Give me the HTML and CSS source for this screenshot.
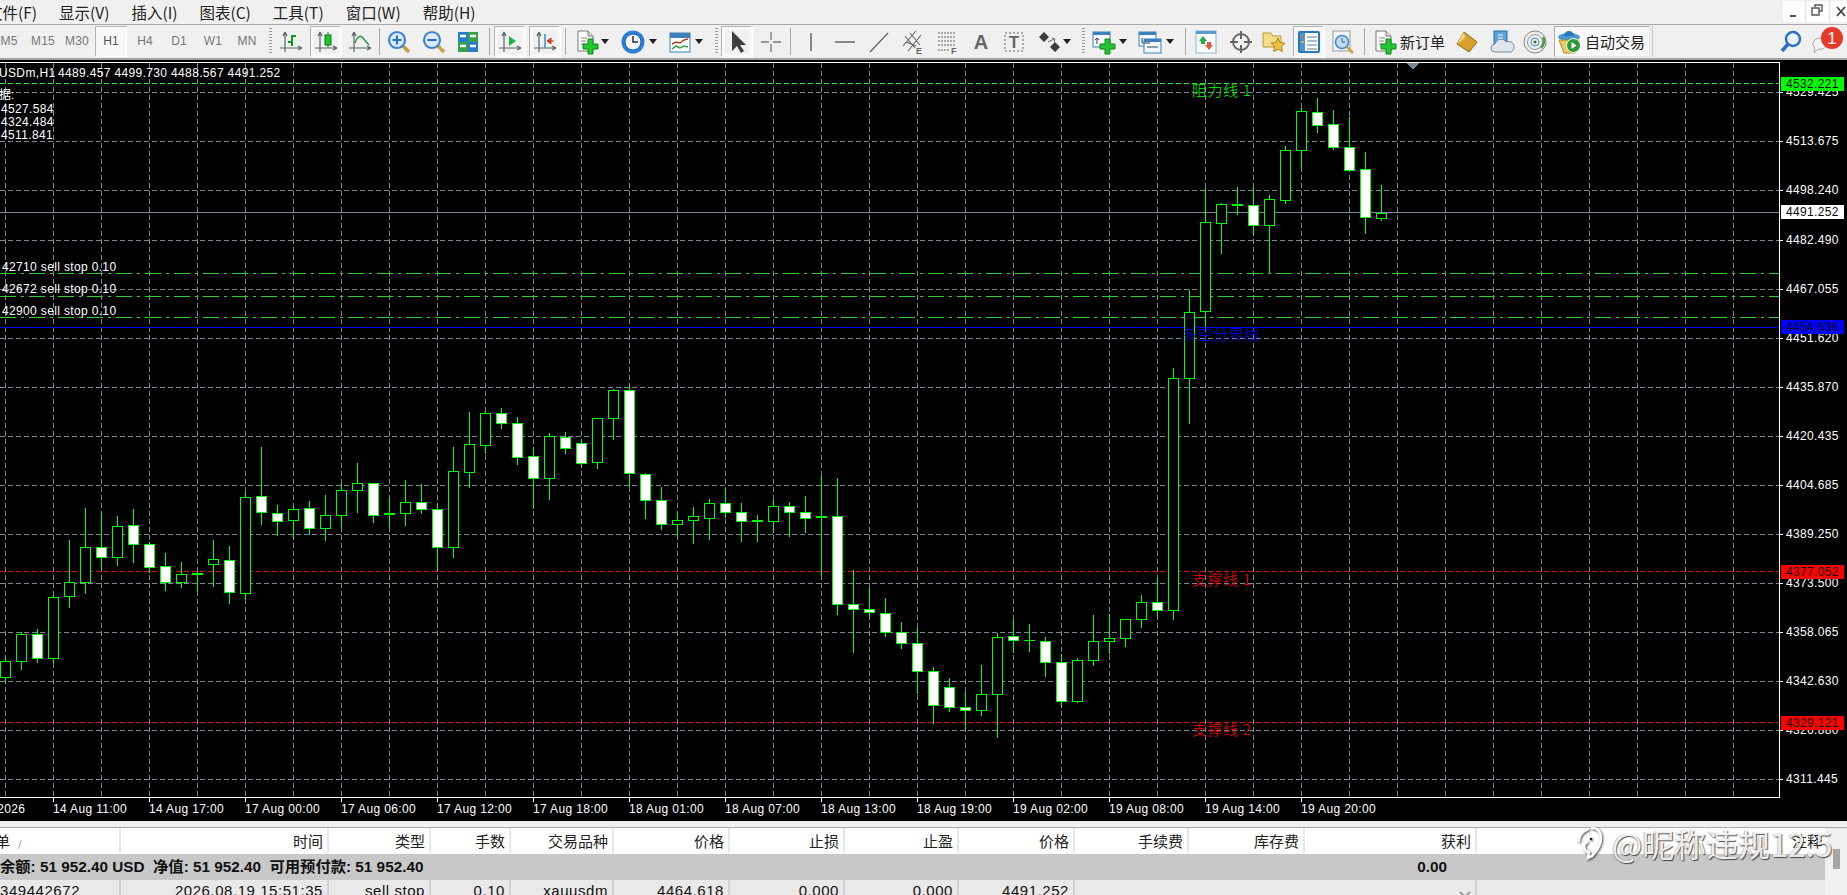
FILE: index.html
```html
<!DOCTYPE html>
<html lang="zh">
<head>
<meta charset="utf-8">
<title>MetaTrader</title>
<link rel="stylesheet" href="styles.css">
</head>
<body>
<div class="app">
  <header class="menu">
    <nav class="menu-items">
      <span class="mi first">文件(F)</span><span class="mi">显示(V)</span><span class="mi">插入(I)</span><span class="mi">图表(C)</span><span class="mi">工具(T)</span><span class="mi">窗口(W)</span><span class="mi">帮助(H)</span>
    </nav>
    <div class="winbtns">
      <span class="wb"><svg viewBox="0 0 21 21" width="21" height="21"><path d="M7 15h6" stroke="#555" stroke-width="2"/></svg></span>
      <span class="wb"><svg viewBox="0 0 21 21" width="21" height="21"><path d="M8 6V4h7v6h-3M5 7h7v7H5z" fill="none" stroke="#555" stroke-width="1.4"/></svg></span>
      <span class="wb"><svg viewBox="0 0 21 21" width="21" height="21"><path d="M6 6l8 9M14 6l-8 9" stroke="#444" stroke-width="1.8"/></svg></span>
    </div>
  </header>

  <div class="toolbar">
    <span class="tf">M5</span><span class="tf">M15</span><span class="tf">M30</span><span class="tf tf-on">H1</span><span class="tf">H4</span><span class="tf">D1</span><span class="tf">W1</span><span class="tf">MN</span>
    <i class="grip g5"></i>
    <span class="ic g7"><svg viewBox="0 0 24 24"><use href="#axes"/><path d="M13 5v11M13 6h4M9 12h4" stroke="#0a9a1e" stroke-width="2" fill="none"/></svg></span>
    <span class="ic g11 on"><svg viewBox="0 0 24 24"><use href="#axes"/><path d="M14 2v16" stroke="#1a7a1a"/><rect x="11" y="5" width="6" height="10" fill="#22c22a" stroke="#0a7a1a"/></svg></span>
    <span class="ic g10"><svg viewBox="0 0 24 24"><use href="#axes"/><path d="M7 13c2-6 5-8 7-6l7 8" stroke="#2a9a3a" stroke-width="1.5" fill="none"/></svg></span>
    <i class="sep g7"></i>
    <span class="ic g7"><svg viewBox="0 0 24 24"><use href="#hand"/><circle cx="10" cy="10" r="8" fill="#dcecfb" stroke="#3f84d2" stroke-width="2.2"/><path d="M10 5.500v9M5.500 10h9" stroke="#2a70c8" stroke-width="2.2"/></svg></span>
    <span class="ic g11"><svg viewBox="0 0 24 24"><use href="#hand"/><circle cx="10" cy="10" r="8" fill="#dcecfb" stroke="#3f84d2" stroke-width="2.2"/><path d="M5.500 10h9" stroke="#2a70c8" stroke-width="2.2"/></svg></span>
    <span class="ic g10"><svg viewBox="0 0 24 24"><rect x="2" y="2" width="10" height="10" fill="#2a7cc8"/><rect x="12" y="2" width="10" height="10" fill="#36a04a"/><rect x="2" y="12" width="10" height="10" fill="#36a04a"/><rect x="12" y="12" width="10" height="10" fill="#2a7cc8"/><path d="M4 6h6M14 6h6M4 16h6M14 16h6" stroke="#fff" stroke-width="2.500"/></svg></span>
    <i class="sep g9"></i>
    <span class="ic g8 on"><svg viewBox="0 0 24 24"><use href="#axes"/><path d="M11 6l7 5-7 5z" fill="#1fb34a"/></svg></span>
    <span class="ic g11 on"><svg viewBox="0 0 24 24"><use href="#axes"/><path d="M12 4v14" stroke="#3a86c8" stroke-width="1.500"/><path d="M21 11h-4M14 11l4-3v6z" fill="#c83a1a" stroke="#c83a1a"/></svg></span>
    <i class="sep g8"></i>
    <span class="ic g9"><svg viewBox="0 0 24 24"><use href="#doc"/><use href="#plus"/></svg></span><i class="caret g2"></i>
    <span class="ic g12"><svg viewBox="0 0 24 24"><circle cx="12" cy="12" r="11.500" fill="#2b7fd6"/><circle cx="12" cy="12" r="8" fill="#f4f8fc" stroke="#0f5fb0"/><path d="M12 6v6h5" stroke="#234" stroke-width="1.500" fill="none"/></svg></span><i class="caret g4"></i>
    <span class="ic g11"><svg viewBox="0 0 24 24"><rect x="2" y="3" width="20" height="19" fill="#fff" stroke="#3c80bc"/><rect x="2" y="3" width="20" height="5" fill="#3c80bc"/><path d="M4 14l4-2 4 1 4-3 4-1" stroke="#b8401a" stroke-width="1.500" fill="none"/><path d="M4 19l4-3 4 2 4-2 4 1" stroke="#3aa04a" stroke-width="1.500" fill="none"/></svg></span><i class="caret g3"></i>
    <i class="grip g12"></i>
    <span class="ic g7 on"><svg viewBox="0 0 24 24"><path d="M7 1v20l5-5 4 7 3-2-4-6h6z" fill="#3d3d3d"/></svg></span>
    <span class="ic g10"><svg viewBox="0 0 24 24"><path d="M12 2v8M12 14v8M2 12h8M14 12h8" stroke="#777" stroke-width="1.300"/></svg></span>
    <i class="sep g7"></i>
    <span class="ic g8"><svg viewBox="0 0 24 24"><path d="M12 3v18" stroke="#666" stroke-width="1.500"/></svg></span>
    <span class="ic g10"><svg viewBox="0 0 24 24"><path d="M2 12h20" stroke="#666" stroke-width="1.500"/></svg></span>
    <span class="ic g10"><svg viewBox="0 0 24 24"><path d="M3 22L21 3" stroke="#666" stroke-width="1.300"/></svg></span>
    <span class="ic g10"><svg viewBox="0 0 24 24"><path d="M2 16L15 1M7 21L20 5M4 6l10 12M9 3l10 12M5 12l10 4" stroke="#666" stroke-width="1.100" fill="none"/><text x="15" y="24" class="ic-t">E</text></svg></span>
    <span class="ic g10"><svg viewBox="0 0 24 24"><path d="M3 3h18M3 7h18M3 11h18M3 15h18M3 20h12" stroke="#666" stroke-dasharray="2 1" fill="none"/><text x="16" y="24" class="ic-t">F</text></svg></span>
    <span class="ic g10"><svg viewBox="0 0 24 24"><text x="12" y="19" class="ic-a">A</text></svg></span>
    <span class="ic g9"><svg viewBox="0 0 24 24"><rect x="3" y="3" width="18" height="18" fill="none" stroke="#666" stroke-dasharray="2 2"/><text x="12" y="18" class="ic-a sm">T</text></svg></span>
    <span class="ic g12"><svg viewBox="0 0 24 24"><path d="M6 2l5 5-5 5-5-5zM17 12l5 5-5 5-5-5z" fill="#3c3c3c"/><path d="M10 12l6-3M14 8l3 1-1 3" stroke="#666" fill="none"/></svg></span><i class="caret g1"></i>
    <i class="grip g11"></i>
    <span class="ic g7"><svg viewBox="0 0 24 24"><rect x="1" y="2" width="17" height="15" fill="#f4f8fc" stroke="#3c80bc"/><rect x="1" y="2" width="17" height="3" fill="#3c80bc"/><path d="M5 8v6M3 10l2-2 2 2" stroke="#345" fill="none"/><use href="#plus"/></svg></span><i class="caret g3"></i>
    <span class="ic g11"><svg viewBox="0 0 24 24"><rect x="1" y="2" width="17" height="14" fill="#f4f8fc" stroke="#3c80bc"/><rect x="1" y="2" width="17" height="3" fill="#3c80bc"/><rect x="6" y="9" width="17" height="14" fill="#f4f8fc" stroke="#3c80bc"/><rect x="6" y="9" width="17" height="3" fill="#3c80bc"/><path d="M9 17h11" stroke="#345"/><path d="M4 8v5M4 13h8" stroke="#345"/></svg></span><i class="caret g4"></i>
    <i class="sep g11"></i>
    <span class="ic g8"><svg viewBox="0 0 24 24"><rect x="2" y="1" width="20" height="22" fill="#f8fbff" stroke="#8cb4d8"/><rect x="2" y="1" width="20" height="3" fill="#5b9bd0"/><path d="M9 6l4 5h-2v3H7v-3H5z" fill="#2aa84a"/><path d="M15 20l-4-5h2v-3h4v3h2z" fill="#e0603a"/></svg></span>
    <span class="ic g11"><svg viewBox="0 0 24 24"><circle cx="12" cy="12" r="8" fill="none" stroke="#666" stroke-width="2"/><path d="M12 1v8M12 15v8M1 12h8M15 12h8" stroke="#666" stroke-width="2"/></svg></span>
    <span class="ic g9"><svg viewBox="0 0 24 24"><path d="M1 3h8l2 3h8v11H1z" fill="#f4dc88" stroke="#b89a40"/><path d="M16 8l2.200 4.500 4.800.7-3.500 3.400.8 4.900-4.300-2.300-4.300 2.300.8-4.900L9 13.200l4.800-.7z" fill="#f0c040" stroke="#a88420"/></svg></span>
    <span class="ic g11 on"><svg viewBox="0 0 24 24"><rect x="2" y="2" width="20" height="20" rx="1" fill="#fff" stroke="#2a78bc" stroke-width="2"/><rect x="3" y="3" width="5" height="18" fill="#4a96d4"/><path d="M10 7h10M10 11h10M10 15h10M10 19h10" stroke="#5a7a94"/><path d="M4 7h3" stroke="#e0603a" stroke-width="2"/><path d="M4 12h3" stroke="#e0b03a" stroke-width="2"/></svg></span>
    <span class="ic g10"><svg viewBox="0 0 24 24"><rect x="2" y="1" width="17" height="20" fill="#f4f4f4" stroke="#999"/><circle cx="11" cy="12" r="6.500" fill="#bcdcf4" stroke="#4a88c4" stroke-width="1.500"/><path d="M11 8v4h3" stroke="#456" fill="none"/><path d="M16 17l6 6" stroke="#c8a040" stroke-width="2.500"/></svg></span>
    <i class="sep g9"></i>
    <span class="ic g8"><svg viewBox="0 0 24 24"><use href="#doc"/><use href="#plus"/></svg></span>
    <span class="tx g3">新订单</span>
    <span class="ic g10"><svg viewBox="0 0 24 24"><path d="M9 2l13 10-8 10L2 14z" fill="#d9a12e" stroke="#8c6414"/><path d="M9 2l-7 12 8-6z" fill="#f4d886"/></svg></span>
    <span class="ic g11"><svg viewBox="0 0 24 24"><rect x="4" y="1" width="13" height="14" fill="#5aa2dc" stroke="#2a6ca8"/><path d="M8 5h5M8 8h5" stroke="#fff"/><path d="M5 22a4 4 0 010-8 6 6 0 0111-2 5 5 0 015 10z" fill="#dfe6ee" stroke="#7c8ca0"/></svg></span>
    <span class="ic g9"><svg viewBox="0 0 24 24"><circle cx="12" cy="12" r="11" fill="#eee" stroke="#888"/><circle cx="12" cy="12" r="7.500" fill="none" stroke="#999"/><circle cx="12" cy="12" r="4" fill="none" stroke="#4a8ec4"/><circle cx="12" cy="12" r="1.500" fill="#2a7a2a"/><path d="M18 18c3-3 4-8 2-11" stroke="#4a9a4a" stroke-width="2.500" fill="none"/></svg></span>
    <div class="auto g7">
      <span class="ic"><svg viewBox="0 0 24 24"><ellipse cx="12" cy="7" rx="11" ry="4" fill="#4a96d4"/><path d="M7 6a5 5 0 0110 0z" fill="#2a78bc"/><path d="M2 10h20l-4 13H7z" fill="#e8cc62" stroke="#a88a2c"/><circle cx="16.500" cy="15.500" r="7" fill="#2a9a3a" stroke="#fff"/><path d="M14.500 12v7l5-3.500z" fill="#fff"/></svg></span>
      <span class="tx g4">自动交易</span>
    </div>
    <i class="sep end g2"></i>
    <div class="tool-right">
      <span class="ic"><svg viewBox="0 0 24 24"><circle cx="14" cy="9" r="7" fill="#eaf3fb" stroke="#3070c0" stroke-width="2.500"/><path d="M9 14l-6 7" stroke="#3070c0" stroke-width="3.500"/></svg></span>
      <span class="ic chat"><svg viewBox="0 0 24 24"><path d="M1 14a7 6 0 0114 0 7 6 0 01-9 5l-4 4 1-5a7 6 0 01-2-4z" fill="#f4f4f4" stroke="#aaa"/><circle cx="20" cy="8" r="11" fill="#e8382a"/><text x="20" y="14" class="ic-b">1</text></svg></span>
    </div>
  </div>

  <div class="chart-wrap">
    <svg class="chart" id="chart" viewBox="0 60 1847 761" width="1847" height="761" xmlns="http://www.w3.org/2000/svg">
      <g id="grid"></g>
      <path class="frame" d="M0 62.500H1779.500V797.500H0"/>
      <path class="hl hl-green" d="M0 83.500H1779"/>
      <path class="hl hl-bid" d="M0 212.500H1779"/>
      <path class="hl hl-order" d="M0 273.500H1779"/>
      <path class="hl hl-order" d="M0 296.500H1779"/>
      <path class="hl hl-order" d="M0 317.500H1779"/>
      <path class="hl hl-blue" d="M0 327.500H1779"/>
      <path class="hl hl-red" d="M0 571.500H1779"/>
      <path class="hl hl-red" d="M0 722.500H1779"/>
      <g id="candles"></g>
      <path class="marker" d="M1407 63h12l-6 7z"/>

      <text class="t" x="-1" y="77">USDm,H1</text>
      <text class="t" x="58" y="77">4489.457 4499.730 4488.567 4491.252</text>
      <text class="t cjk" x="-13" y="99">数据:</text>
      <text class="t" x="1" y="113">4527.584</text>
      <text class="t" x="1" y="126">4324.484</text>
      <text class="t" x="1" y="139">4511.841</text>
      <text class="t" x="2" y="271">42710 sell stop 0.10</text>
      <text class="t" x="2" y="293">42672 sell stop 0.10</text>
      <text class="t" x="2" y="315">42900 sell stop 0.10</text>

      <text class="lbl lbl-g" x="1192" y="96">阻力线 1</text>
      <text class="lbl lbl-b" x="1182" y="340">多空分界线</text>
      <text class="lbl lbl-r" x="1192" y="585">支撑线 1</text>
      <text class="lbl lbl-r" x="1192" y="735">支撑线 2</text>

      <g class="axis-y">
        <text class="t" x="1786" y="96">4529.425</text>
        <text class="t" x="1786" y="145">4513.675</text>
        <text class="t" x="1786" y="194">4498.240</text>
        <text class="t" x="1786" y="244">4482.490</text>
        <text class="t" x="1786" y="293">4467.055</text>
        <text class="t" x="1786" y="342">4451.620</text>
        <text class="t" x="1786" y="391">4435.870</text>
        <text class="t" x="1786" y="440">4420.435</text>
        <text class="t" x="1786" y="489">4404.685</text>
        <text class="t" x="1786" y="538">4389.250</text>
        <text class="t" x="1786" y="587">4373.500</text>
        <text class="t" x="1786" y="636">4358.065</text>
        <text class="t" x="1786" y="685">4342.630</text>
        <text class="t" x="1786" y="734">4326.880</text>
        <text class="t" x="1786" y="783">4311.445</text>
      </g>
      <rect class="pl pl-g" x="1781" y="77" width="63" height="14"/><text class="t dark" x="1786" y="88">4532.221</text>
      <rect class="pl pl-w" x="1781" y="205" width="63" height="14"/><text class="t dark" x="1786" y="216">4491.252</text>
      <rect class="pl pl-b" x="1781" y="320" width="63" height="14"/><text class="t dark" x="1786" y="331">4454.636</text>
      <rect class="pl pl-r" x="1781" y="565" width="63" height="14"/><text class="t dark" x="1786" y="576">4377.052</text>
      <rect class="pl pl-r" x="1781" y="716" width="63" height="14"/><text class="t dark" x="1786" y="727">4329.121</text>

      <g class="axis-x">
        <text class="t" x="-46" y="813">14 Aug 2026</text>
        <text class="t" x="53" y="813">14 Aug 11:00</text>
        <text class="t" x="149" y="813">14 Aug 17:00</text>
        <text class="t" x="245" y="813">17 Aug 00:00</text>
        <text class="t" x="341" y="813">17 Aug 06:00</text>
        <text class="t" x="437" y="813">17 Aug 12:00</text>
        <text class="t" x="533" y="813">17 Aug 18:00</text>
        <text class="t" x="629" y="813">18 Aug 01:00</text>
        <text class="t" x="725" y="813">18 Aug 07:00</text>
        <text class="t" x="821" y="813">18 Aug 13:00</text>
        <text class="t" x="917" y="813">18 Aug 19:00</text>
        <text class="t" x="1013" y="813">19 Aug 02:00</text>
        <text class="t" x="1109" y="813">19 Aug 08:00</text>
        <text class="t" x="1205" y="813">19 Aug 14:00</text>
        <text class="t" x="1301" y="813">19 Aug 20:00</text>
      </g>
    </svg>
  </div>

  <section class="terminal">
    <div class="tbl">
      <div class="row head">
        <div class="c c-first"><span class="clip">订单</span><span class="sort">/</span></div>
        <div class="c">时间</div><div class="c">类型</div><div class="c">手数</div><div class="c">交易品种</div><div class="c">价格</div><div class="c">止损</div><div class="c">止盈</div><div class="c">价格</div><div class="c">手续费</div><div class="c">库存费</div><div class="c">获利</div><div class="c c-note">注释</div>
      </div>
      <div class="row summary">
        <div class="sum-text">余额: 51 952.40 USD&nbsp; 净值: 51 952.40&nbsp; 可用预付款: 51 952.40</div>
        <div class="sum-profit">0.00</div>
      </div>
      <div class="row data">
        <div class="c c-first">349442672</div>
        <div class="c">2026.08.19 15:51:35</div><div class="c">sell stop</div><div class="c">0.10</div><div class="c">xauusdm</div><div class="c">4464.618</div><div class="c">0.000</div><div class="c">0.000</div><div class="c">4491.252</div><div class="c"></div><div class="c"></div>
        <div class="c c-x"><svg viewBox="0 0 12 12" width="12" height="12"><path d="M1 1l10 10M11 1L1 11" stroke="#9a9a9a" stroke-width="2"/></svg></div>
        <div class="c c-note"></div>
      </div>
    </div>
    <div class="scroll"><i class="thumb"></i></div>
  </section>

  <div class="watermark">
    <svg viewBox="0 0 26 34" width="26" height="34"><path d="M16 2c6 0 9 4 9 10 0 9-6 14-9 18l-4 2 1-6c-4 0-5-3-5-6 0-2 1-3 3-4M3 15c0-6 4-10 9-12" fill="none" stroke="#fff" stroke-width="2.600" stroke-linecap="round"/><circle cx="15" cy="13" r="1.300" fill="#222"/></svg>
    <span>@昵称违规12.5</span>
  </div>
</div>

<svg class="defs" width="0" height="0" xmlns="http://www.w3.org/2000/svg">
  <defs>
    <g id="axes"><path d="M6 2v20M1 18h22M6 2L4 6M6 2l2 4M23 18l-4-2M23 18l-4 2" fill="none" stroke="#56686a" stroke-width="1.200"/></g>
    <g id="hand"><path d="M15 15l7 7" stroke="#c8a040" stroke-width="3.500"/></g>
    <g id="doc"><path d="M3 1h10l5 5v15H3z" fill="#fafafa" stroke="#777"/><path d="M13 1v5h5" fill="#ddd" stroke="#777"/><path d="M6 8h6M6 11h5M6 14h4" stroke="#888"/></g>
    <g id="plus"><path d="M13 9h5v5h5v5h-5v5h-5v-5H8v-5h5z" fill="#26c434" stroke="#0c8a1a"/></g>
  </defs>
</svg>
<script src="chart.js"></script>
</body>
</html>
```

FILE: styles.css
```css
* { box-sizing: border-box; }
html, body { margin: 0; padding: 0; background: #f0f0f0; }
body { font-family: "Liberation Sans", "Noto Sans CJK SC", sans-serif; }

.app { position: relative; width: 1847px; height: 895px; overflow: hidden; display: flex; flex-direction: column; background: #f0f0f0; }

/* menu */
.menu { height: 25px; flex: none; display: flex; justify-content: space-between; border-bottom: 1px solid #a9a9a9; }
.menu-items { display: flex; align-items: center; font: 15.5px/24px "Noto Sans CJK SC", sans-serif; color: #222; margin-left: -13px; }
.mi { margin-right: 22px; }
.winbtns { display: flex; gap: 3px; padding-top: 1px; margin-right: -5px; }
.wb { width: 21px; height: 21px; background: #fff; display: block; }
.wb svg { display: block; }

/* toolbar */
.toolbar { height: 35px; flex: none; display: flex; align-items: center; margin-left: -8px; border-bottom: 2px solid #a3a3a3; }
.tf { width: 34px; flex: none; text-align: center; font: 12px "Liberation Sans", sans-serif; color: #777; letter-spacing: .2px; height: 31px; line-height: 31px; }
.tf-on { width: 32px; margin: 0 1px; color: #555; background: #f8f8f8; border: 1px solid; border-color: #b4b4b4 #fff #fff #b4b4b4; line-height: 29px; }
.ic { width: 24px; height: 24px; flex: none; display: block; position: relative; }
.ic svg { display: block; width: 24px; height: 24px; overflow: visible; }
.on { box-shadow: 0 0 0 3px #f8f8f8, -1px -1px 0 3px #b4b4b4, 1px 1px 0 3px #fff; }
.grip { width: 3px; height: 27px; flex: none; background: repeating-linear-gradient(#9a9a9a 0 1px, transparent 1px 3px); }
.sep { width: 1px; height: 27px; flex: none; background: #a8a8a8; display: block; }
.sep.end { height: 31px; background: #c8c8c8; }
.caret { flex: none; width: 0; height: 0; border: 4px solid transparent; border-top: 5px solid #222; border-bottom: 0; display: block; }
.tx { flex: none; font: 15px/24px "Noto Sans CJK SC", sans-serif; color: #222; white-space: nowrap; }
.auto { width: 96px; height: 31px; flex: none; display: flex; align-items: center; padding-left: 2px; background: #f8f8f8; border: 1px solid; border-color: #a8a8a8 #e4e4e4 #e4e4e4 #a8a8a8; }
.tool-right { margin-left: auto; margin-right: 11px; display: flex; gap: 9px; }

.g1 { margin-left: 1px; } .g2 { margin-left: 2px; } .g3 { margin-left: 3px; } .g4 { margin-left: 4px; }
.g5 { margin-left: 5px; } .g7 { margin-left: 7px; } .g8 { margin-left: 8px; }
.g9 { margin-left: 9px; } .g10 { margin-left: 10px; } .g11 { margin-left: 11px; } .g12 { margin-left: 12px; }

.ic-t { font: bold 9px "Liberation Sans", sans-serif; fill: #666; }
.ic-a { font: bold 20px "Liberation Sans", sans-serif; fill: #666; text-anchor: middle; }
.ic-a.sm { font-size: 17px; }
.ic-b { font: 17px "Liberation Sans", sans-serif; fill: #fff; text-anchor: middle; }

/* chart */
.chart-wrap { height: 761px; flex: none; background: #000; }
.chart { display: block; background: #000; shape-rendering: crispEdges; }
.gridline { stroke: #778899; stroke-width: 1; stroke-dasharray: 5 3; fill: none; }
.tick { stroke: #fff; stroke-width: 1; fill: none; }
.frame { stroke: #fff; stroke-width: 1; fill: none; }
.hl { stroke-width: 1; fill: none; }
.hl-green { stroke: #2fe02f; stroke-dasharray: 5 3; }
.hl-bid { stroke: #778899; }
.hl-order { stroke: #32cd32; stroke-dasharray: 16 5 3 5; }
.hl-blue { stroke: #0000e6; }
.hl-red { stroke: #d01818; stroke-dasharray: 5 3; }
.wick { stroke: #00ff00; stroke-width: 1; fill: none; }
.body { stroke: #00ff00; stroke-width: 1; }
.body-up { fill: #000; }
.body-down { fill: #fff; }
.doji { fill: #00ff00; }
.marker { fill: #778899; }

.t { font: 12px "Liberation Sans", "Noto Sans CJK SC", sans-serif; letter-spacing: .35px; fill: #fff; shape-rendering: auto; white-space: pre; }
.t.cjk { font-size: 12px; letter-spacing: 0; }
.t.dark { fill: #0a0a0a; }
.lbl { font: 300 15px "Noto Sans CJK SC", sans-serif; letter-spacing: .6px; }
.lbl-g { fill: #00ff00; }
.lbl-b { fill: #0000ff; }
.lbl-r { fill: #ff0000; }
.pl-g { fill: #00ff00; }
.pl-w { fill: #fff; }
.pl-b { fill: #0000ff; }
.pl-r { fill: #ff0000; }

/* terminal */
.terminal { flex: 1; margin-top: 6px; border-top: 1px solid #a8a8a8; display: flex; min-height: 0; overflow: hidden; }
.tbl { width: 1825px; flex: none; }
.row { display: grid; grid-template-columns: 121px 208px 102px 80px 103px 116px 115px 114px 116px 114px 116px 172px 348px; }
.c { padding-right: 4px; text-align: right; white-space: nowrap; overflow: hidden; }
.head { height: 26px; background: #fff; font: 15px/25px "Noto Sans CJK SC", sans-serif; color: #222; }
.head .c { border-right: 2px solid #e8e8e8; height: 25px; }
.head .c-first { text-align: left; padding: 0; }
.head .c-note { border-right: 0; padding-right: 3px; }
.clip { margin-left: -20px; }
.sort { margin-left: 8px; font-size: 9px; color: #777; }
.summary { height: 26px; background: #c8c8c8; font: bold 15.3px/26px "Liberation Sans", "Noto Sans CJK SC", sans-serif; color: #111; display: flex; justify-content: space-between; white-space: nowrap; }
.sum-profit { margin-right: 378px; }
.data { height: 26px; background: #e9e9e9; font: 15px/22px "Liberation Sans", sans-serif; letter-spacing: .55px; color: #111; }
.data .c { border-right: 2px solid #d2d2d2; height: 26px; }
.data .c:nth-child(n+10):nth-child(-n+11) { border-right: 0; }
.data .c-first { text-align: left; padding: 0; }
.data .c-note { border-right: 0; }
.c-x { padding-top: 7px; }
.scroll { flex: 1; background: #f0f0f0; position: relative; }
.thumb { position: absolute; left: 8px; top: 21px; width: 7px; height: 20px; background: #a6a6a6; display: block; }

/* watermark */
.watermark { position: absolute; left: 1576px; top: 826px; display: flex; align-items: center; gap: 10px; color: rgba(255,255,255,.9); font: 32px/34px "Noto Sans CJK SC", sans-serif; text-shadow: 1px 1px 1px rgba(0,0,0,.65), -1px 0 1px rgba(0,0,0,.25); white-space: nowrap; pointer-events: none; }
.watermark svg { display: block; filter: drop-shadow(1px 1px 1px rgba(0,0,0,.7)); }

.defs { position: absolute; }
```

FILE: chart.js
```js
(function () {
  var NS = "http://www.w3.org/2000/svg";
  // Each group: base y + zoom-scale (v/3) rows of [wickTop, wickBottom, bodyTop, bodyBottom, bearish]
  var groups = [
    [440, [
      [650,728,664,712,0],[576,690,583,664,0],[568,668,583,655,1],[465,670,472,655,0],[300,503,427,469,0],
      [205,461,322,425,0],[218,386,322,352,1],[228,378,259,352,0],[208,369,256,313,1],[305,400,313,382,1],
      [339,452,379,427,1],[366,443,403,427,0],[396,455,403,403,0],[300,440,358,373,0],[318,491,361,457,1],
      [156,479,172,460,0],[22,254,169,217,1],[195,288,220,244,1],[198,296,208,241,0],[183,284,205,265,1],
      [165,302,226,265,0],[130,260,151,226,0],[70,218,130,151,0],[130,248,130,226,1],[175,260,221,221,0],
      [121,257,187,220,0],[132,221,187,208,1],[190,392,208,322,1],[22,353,94,322,0]
    ]],
    [370, [
      [126,353,222,305,0],[122,252,130,224,0],[114,177,130,160,1],[142,285,160,260,1],[230,416,259,325,1],
      [190,390,199,325,0],[186,252,202,233,1],[208,290,220,278,1],[145,297,145,275,0],[58,210,61,145,0],
      [46,350,61,310,1],[310,447,313,391,1],[351,480,391,463,1],[427,500,451,463,0],[411,522,439,451,0],
      [388,510,400,443,0],[354,445,400,427,1],[400,516,427,454,1],[435,516,452,452,0],[390,490,409,454,0],
      [396,500,409,427,1]
    ]],
    [460, [
      [108,220,157,175,1],[48,347,170,170,0],[54,465,169,433,1],[330,578,433,448,1],[385,470,448,457,1],
      [415,530,460,517,1],[487,566,515,550,1],[505,703,550,634,1],[622,792,634,736,1],[655,755,682,742,1],
      [697,810,742,751,1],[615,768,703,751,0],[520,833,532,703,0],[477,578,529,541,1],[492,575,544,544,2],
      [531,650,544,607,1],[583,740,607,724,1],[595,728,601,724,0],[465,617,544,601,0],[462,581,535,544,0],
      [478,560,478,535,0],[405,503,427,478,0],[355,470,427,451,1],[-276,480,-246,451,0]
    ]],
    [70, [
      [660,1062,727,924,0],[355,770,457,724,0],[400,551,403,458,0],[351,435,405,405,0],[352,495,406,466,1],
      [376,610,388,466,0],[228,402,241,389,0],[115,297,124,241,0],[85,188,127,166,1],[120,240,163,232,1],
      [140,305,232,301,1],[247,492,298,442,1],[346,452,428,445,0]
    ]]
  ];

  function el(name, attrs, parent) {
    var n = document.createElementNS(NS, name);
    for (var k in attrs) n.setAttribute(k, attrs[k]);
    parent.appendChild(n);
    return n;
  }

  // grid
  var g = document.getElementById("grid");
  var ys = [92, 141, 190, 240, 289, 338, 387, 436, 485, 534, 583, 632, 681, 730, 779];
  ys.forEach(function (y) {
    el("path", { "class": "gridline", d: "M0 " + (y + 0.5) + "H1779" }, g);
    el("path", { "class": "tick", d: "M1780 " + (y + 0.5) + "H1783" }, g);
  });
  for (var x = 5; x < 1779; x += 48) {
    el("path", { "class": "gridline", d: "M" + (x + 0.5) + " 63V797" }, g);
  }
  for (var tx = 53; tx <= 1301; tx += 96) {
    el("path", { "class": "tick", d: "M" + (tx + 0.5) + " 798V802" }, g);
  }

  // candles
  var c = document.getElementById("candles");
  var i = 0;
  groups.forEach(function (grp) {
    var base = grp[0];
    grp[1].forEach(function (d) {
      var cx = 5 + 16 * i;
      i++;
      var wt = Math.round(base + d[0] / 3);
      var wb = Math.round(base + d[1] / 3);
      var bt = Math.round(base + d[2] / 3);
      var bb = Math.round(base + d[3] / 3);
      el("path", { "class": "wick", d: "M" + (cx + 0.5) + " " + wt + "V" + wb }, c);
      if (bb <= bt) {
        el("rect", { "class": "doji", x: cx - 5, y: bt - 1, width: 11, height: d[4] === 2 ? 1 : 2 }, c);
      } else {
        el("rect", {
          "class": "body " + (d[4] ? "body-down" : "body-up"),
          x: cx - 4.5, y: bt + 0.5, width: 10, height: bb - bt
        }, c);
      }
    });
  });
})();
```
